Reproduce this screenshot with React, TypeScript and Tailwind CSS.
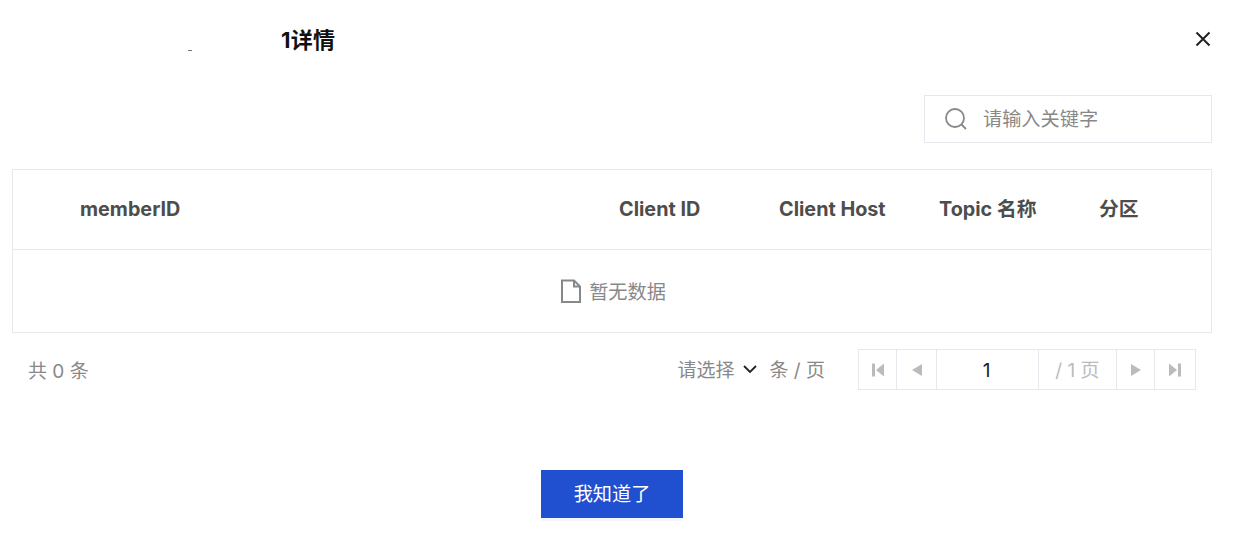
const FONT = "font-['Inter','Noto_Sans_CJK_SC',sans-serif]";

function PagerButton({ width, children, last }: { width: string; children: React.ReactNode; last?: boolean }) {
  return (
    <div className={`flex h-full items-center justify-center ${width} ${last ? "" : "border-r border-[#e7e8ee]"}`}>
      <svg width="14" height="14" viewBox="0 0 14 14" fill="#bbbbbb">
        {children}
      </svg>
    </div>
  );
}

export default function App() {
  return (
    <div className={`flex h-[534px] w-[1234px] flex-col overflow-hidden bg-white ${FONT}`}>
      {/* title */}
      <div className="flex h-[95px] items-start pl-[188px] pr-[22px] pt-[26px]">
        <span className="mt-[24px] h-px w-[4px] bg-[#777777]" />
        <h2 className="ml-[89px] text-[22px] font-bold leading-[28px] tracking-[0.3px] text-[#111111]">1详情</h2>
        <svg className="ml-auto mt-[4px]" width="18" height="18" viewBox="0 0 18 18" fill="none" stroke="#222222" strokeWidth="2">
          <path d="M2.5 2.5L15.5 15.5M15.5 2.5L2.5 15.5" />
        </svg>
      </div>

      {/* search */}
      <div className="flex justify-end pr-[22px]">
        <div className="flex h-[48px] w-[288px] items-center border border-[#e7e8ee] pl-[19px]">
          <svg width="24" height="24" viewBox="0 0 24 24" fill="none" stroke="#888888" strokeWidth="1.8">
            <circle cx="11" cy="11" r="9" />
            <path d="M17.5 17.5L22 22" />
          </svg>
          <span className="ml-[15px] text-[19.2px] text-[#888888]">请输入关键字</span>
        </div>
      </div>

      {/* table */}
      <div className="ml-[12px] mt-[26px] w-[1200px] border border-[#e7e8ee]">
        <div className="grid h-[80px] grid-cols-[586px_160px_160px_160px_1fr] items-center border-b border-[#e7e8ee] pt-[1px] text-[19.8px] font-bold text-[#4d4d4d]">
          <div className="pl-[67px]">memberID</div>
          <div className="pl-[20px]">Client ID</div>
          <div className="pl-[20px]">Client Host</div>
          <div className="pl-[20px]">Topic 名称</div>
          <div className="pl-[20px]">分区</div>
        </div>
        <div className="flex h-[82px] items-center justify-center pl-[2px] text-[19.2px] text-[#888888]">
          <svg width="22" height="24" viewBox="0 0 22 24" fill="none" stroke="#888888" strokeWidth="2">
            <path d="M2 1.5H14L20 7.5V23H2Z" />
            <path d="M14 1.5V7.5H20" />
          </svg>
          <span className="ml-[7px] pt-[2px]">暂无数据</span>
        </div>
      </div>

      {/* pagination */}
      <div className="mt-[16px] flex h-[41px] items-center pl-[28px] pr-[38px] text-[19px] text-[#888888]">
        <span className="mt-[6px]">共 0 条</span>
        <span className="ml-auto mt-[3px]">请选择</span>
        <svg className="ml-[8px]" width="16" height="16" viewBox="0 0 16 16" fill="none" stroke="#222222" strokeWidth="1.8">
          <path d="M2 4L8 10L14 4" />
        </svg>
        <span className="ml-[11px] mt-[3px]">条 / 页</span>
        <div className="ml-[33px] flex h-full w-[338px] shrink-0 border border-[#e7e8ee]">
          <PagerButton width="w-[38px]">
            <path d="M1 0.5H4V13.5H1ZM13 0.5V13.5L5 7Z" />
          </PagerButton>
          <PagerButton width="w-[40px]">
            <path d="M12 1V13L2 7Z" />
          </PagerButton>
          <div className="flex w-[102px] items-center justify-center border-r border-[#e7e8ee] pr-[2px] pt-[3px] text-[#222222]">1</div>
          <div className="flex w-[78px] items-center justify-center border-r border-[#e7e8ee] pt-[3px] text-[#bbbbbb]">/ 1 页</div>
          <PagerButton width="w-[38px]">
            <path d="M2 1V13L12 7Z" />
          </PagerButton>
          <PagerButton width="flex-1" last>
            <path d="M1 0.5V13.5L9 7ZM10 0.5H13V13.5H10Z" />
          </PagerButton>
        </div>
      </div>

      {/* footer */}
      <div className="mt-[80px] flex justify-center pr-[10px]">
        <button className="h-[48px] w-[142px] bg-[#2050d0] text-[19.2px] text-white shadow-[0_3px_0_#f5f7fe]">我知道了</button>
      </div>
    </div>
  );
}
